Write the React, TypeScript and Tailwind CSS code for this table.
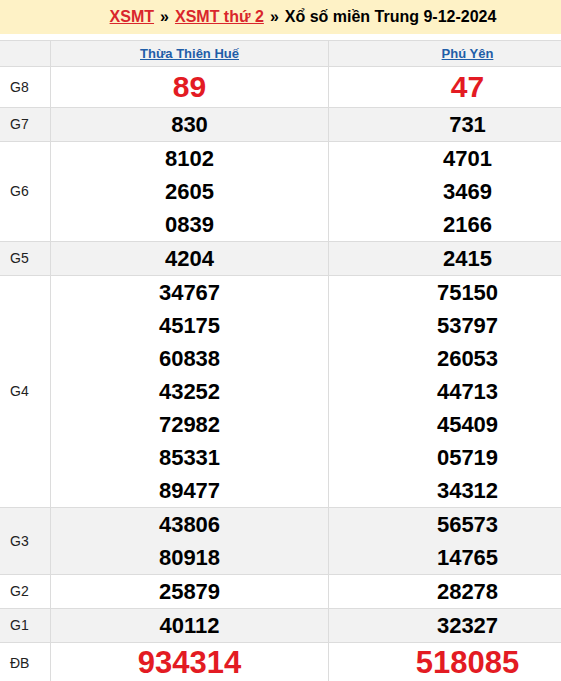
import React from "react";

type Row = { label: string; a: string[]; b: string[]; kind: "big" | "normal" | "db"; gray: boolean };

const rows: Row[] = [
  { label: "G8", a: ["89"], b: ["47"], kind: "big", gray: false },
  { label: "G7", a: ["830"], b: ["731"], kind: "normal", gray: true },
  { label: "G6", a: ["8102", "2605", "0839"], b: ["4701", "3469", "2166"], kind: "normal", gray: false },
  { label: "G5", a: ["4204"], b: ["2415"], kind: "normal", gray: true },
  {
    label: "G4",
    a: ["34767", "45175", "60838", "43252", "72982", "85331", "89477"],
    b: ["75150", "53797", "26053", "44713", "45409", "05719", "34312"],
    kind: "normal",
    gray: false,
  },
  { label: "G3", a: ["43806", "80918"], b: ["56573", "14765"], kind: "normal", gray: true },
  { label: "G2", a: ["25879"], b: ["28278"], kind: "normal", gray: false },
  { label: "G1", a: ["40112"], b: ["32327"], kind: "normal", gray: true },
  { label: "ĐB", a: ["934314"], b: ["518085"], kind: "db", gray: false },
];

function Nums({ items, kind }: { items: string[]; kind: Row["kind"] }) {
  return (
    <div className="flex flex-col items-center border-l border-[#dcdcdc]">
      {items.map((n, i) => (
        <div
          key={i}
          className={
            kind === "big"
              ? "h-[40px] leading-[40px] text-[30px] font-bold text-[#e31b23]"
              : kind === "db"
              ? "h-[40px] leading-[40px] text-[31px] font-bold text-[#e31b23]"
              : "h-[33px] leading-[33px] text-[22px] font-bold text-black"
          }
        >
          {n}
        </div>
      ))}
    </div>
  );
}

export default function App() {
  return (
    <div
      className="w-[561px] h-[681px] overflow-hidden bg-white"
      style={{ fontFamily: '"Liberation Sans", Arial, sans-serif' }}
    >
      <div className="w-[606px]">
        <div className="h-[34px] bg-[#fef2c6] flex items-center justify-center text-[16px] font-bold text-black">
          <a href="#" className="text-[#d9262c] underline">XSMT</a>
          <span className="mx-[6px]">»</span>
          <a href="#" className="text-[#d9262c] underline">XSMT thứ 2</a>
          <span className="mx-[6px]">»</span>
          <span>Xổ số miền Trung 9-12-2024</span>
        </div>
        <div className="h-[6px]" />
        <div className="grid grid-cols-[50px_278px_278px] border-t border-[#dcdcdc] bg-[#f2f2f2] h-[26px]">
          <div />
          <div className="flex items-center justify-center border-l border-[#dcdcdc]">
            <a href="#" className="text-[13px] font-bold text-[#1f5ea8] underline">Thừa Thiên Huế</a>
          </div>
          <div className="flex items-center justify-center border-l border-[#dcdcdc]">
            <a href="#" className="text-[13px] font-bold text-[#1f5ea8] underline">Phú Yên</a>
          </div>
        </div>
        {rows.map((r) => (
          <div
            key={r.label}
            className={
              "grid grid-cols-[50px_278px_278px] border-t border-[#dcdcdc] " +
              (r.gray ? "bg-[#f2f2f2]" : "bg-white")
            }
          >
            <div className="flex items-center pl-[10px] text-[14px] text-[#222]">{r.label}</div>
            <Nums items={r.a} kind={r.kind} />
            <Nums items={r.b} kind={r.kind} />
          </div>
        ))}
      </div>
    </div>
  );
}
